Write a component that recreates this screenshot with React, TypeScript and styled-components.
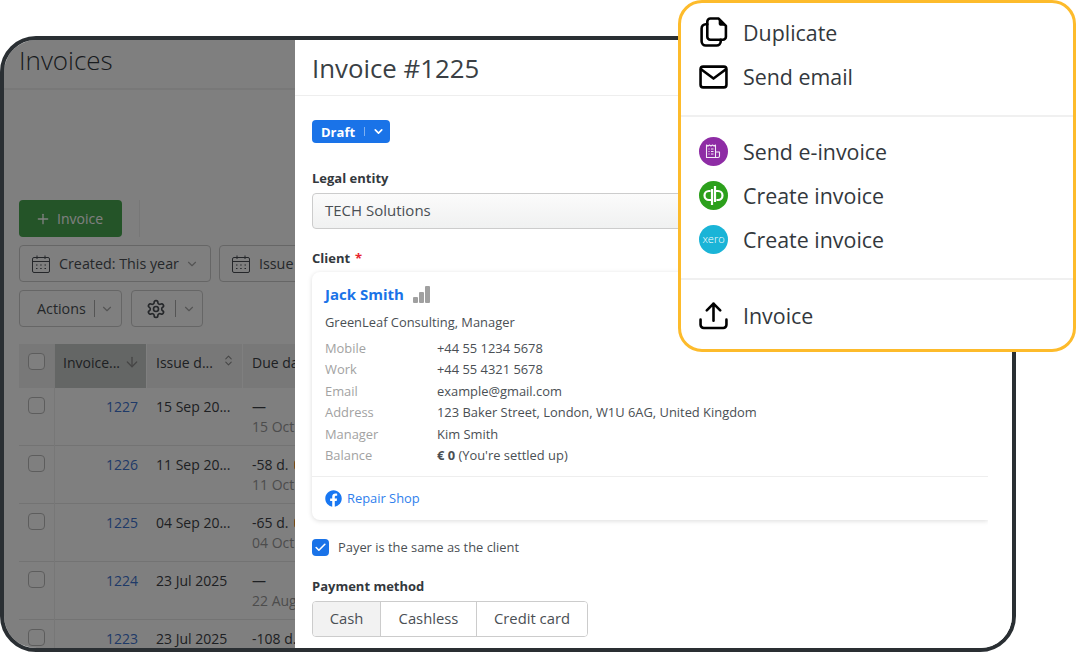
import React from "react";
import styled, { createGlobalStyle } from "styled-components";
import { FaFacebook } from "react-icons/fa";
import { LuChevronDown, LuChevronsUpDown, LuArrowDown, LuSettings, LuPlus, LuCheck } from "react-icons/lu";

const GlobalStyle = createGlobalStyle`
  html, body {
    margin: 0;
    padding: 0;
    background: #fff;
    overflow: hidden;
  }
  body {
    font-family: "Open Sans", "Liberation Sans", sans-serif;
    color: #33383d;
  }
  * {
    box-sizing: border-box;
  }
`;

const Page = styled.div`
  position: relative;
  width: 1076px;
  height: 652px;
  padding-top: 36px;
`;

const Frame = styled.div`
  display: flex;
  width: 1016px;
  height: 616px;
  border: 4px solid #2a2f33;
  border-radius: 36px;
  overflow: hidden;
  background: #fff;
`;

/* background list, dimmed by the drawer */
const ListPane = styled.div`
  position: relative;
  flex: 0 0 291px;
  overflow: hidden;
`;

const Dim = styled.div`
  position: absolute;
  inset: 0;
  background: rgba(0, 0, 0, 0.5);
`;

const ListHeader = styled.div`
  height: 50px;
  padding-left: 15px;
  border-bottom: 2px solid #f0f0f0;
  font-size: 26px;
  font-weight: 300;
  line-height: 40px;
  white-space: nowrap;
`;

const Toolbar = styled.div`
  display: flex;
  flex-direction: column;
  gap: 8px;
  width: 500px;
  padding: 110px 0 0 15px;
`;

const ToolRow = styled.div<{ $gap?: number }>`
  display: flex;
  gap: ${(p) => p.$gap ?? 8}px;
`;

const AddButton = styled.div`
  display: flex;
  align-items: center;
  justify-content: center;
  gap: 6px;
  width: 103px;
  height: 37px;
  padding-right: 3px;
  border-radius: 4px;
  background: #48a851;
  color: #fff;
  font-size: 14px;
`;

const ToolDivider = styled.div`
  width: 1px;
  height: 37px;
  margin-left: 9px;
  background: #eee;
`;

const ToolButton = styled.div<{ $width: number; $pad: number; $gap?: number }>`
  display: flex;
  align-items: center;
  gap: ${(p) => p.$gap ?? 9}px;
  width: ${(p) => p.$width}px;
  height: 37px;
  padding-left: ${(p) => p.$pad}px;
  border: 1px solid #ccc;
  border-radius: 4px;
  font-size: 14.3px;
  color: #4a4f54;
  white-space: nowrap;

  svg {
    flex: none;
  }
`;

const ToolChevron = styled(LuChevronDown)`
  margin-left: -3px;
  color: #a8a8a8;
`;

const ToolSplit = styled.span`
  width: 1px;
  height: 17px;
  background: #aaa;
`;

const Table = styled.div`
  margin: 17px 0 0 15px;
  width: 400px;
  font-size: 14px;
  color: #3c4146;
`;

const Row = styled.div<{ $head?: boolean }>`
  display: grid;
  grid-template-columns: 36px 92px 96px 176px;
  height: ${(p) => (p.$head ? 44 : 58)}px;
  border-bottom: ${(p) => (p.$head ? "none" : "1px solid #e6e6e6")};
`;

const Cell = styled.div`
  padding: 9px 9px;
  white-space: nowrap;
`;

const HeadCell = styled.div<{ $sorted?: boolean }>`
  display: flex;
  justify-content: space-between;
  gap: 4px;
  margin-right: 1px;
  padding: ${(p) => (p.$sorted ? "9px 6px 0 8px" : "9px 7px 0 9px")};
  background: ${(p) => (p.$sorted ? "#c9cdca" : "#f1f1f1")};
  white-space: nowrap;

  svg {
    flex: none;
    margin-top: 1px;
    color: #8c8c8c;
  }
`;

const CheckCell = styled.div<{ $head?: boolean }>`
  padding: 9px;
  border-right: 1px solid #efefef;
  background: ${(p) => (p.$head ? "#f1f1f1" : "transparent")};
`;

const RowCheck = styled.div`
  width: 17px;
  height: 17px;
  border: 1px solid #bbb;
  border-radius: 4px;
  background: #fff;
`;

const InvoiceNumber = styled.a`
  display: block;
  text-align: right;
  color: #3f74d0;
`;

const DueTop = styled.div`
  display: flex;
  align-items: center;
  gap: 6px;
  line-height: 20px;
`;

const OverdueDot = styled.span`
  width: 8px;
  height: 10px;
  border-radius: 3px;
  background: #f0962a;
`;

const Muted = styled.div`
  line-height: 20px;
  color: #999;
`;

/* invoice drawer */
const Drawer = styled.div`
  flex: 1;
  min-width: 0;
  background: #fff;
`;

const DrawerHeader = styled.div`
  height: 56px;
  padding-left: 17px;
  border-bottom: 1px solid #eee;
  font-size: 25.8px;
  line-height: 56px;
  color: #3a3f44;
`;

const DrawerBody = styled.div`
  padding: 24px 24px 0 17px;
`;

const StatusButton = styled.div`
  display: inline-flex;
  align-items: center;
  width: 78px;
  height: 23px;
  padding-left: 9px;
  border-radius: 4px;
  background: #1a73e8;
  color: #fff;
  font-size: 13px;
  font-weight: 700;
  vertical-align: top;
`;

const StatusSplit = styled.span`
  width: 1px;
  height: 9px;
  margin: 0 7px 0 9px;
  background: #7fb0f0;
`;

const FieldLabel = styled.div<{ $top: number }>`
  margin-top: ${(p) => p.$top}px;
  font-size: 13px;
  font-weight: 700;
  line-height: 18px;
  color: #33383d;
`;

const Required = styled.span`
  margin-left: 5px;
  color: #e8242c;
`;

const SelectBox = styled.div`
  height: 36px;
  margin-top: 6px;
  padding-left: 12px;
  border: 1px solid #ccc;
  border-radius: 4px;
  background: linear-gradient(#fbfbfb, #f0f1f1);
  font-size: 15px;
  line-height: 33px;
  color: #4a4f54;
`;

const ClientCard = styled.div`
  margin-top: 5px;
  height: 248px;
  padding-top: 11px;
  border-radius: 8px 0 0 8px;
  box-shadow: 0 1px 5px rgba(0, 0, 0, 0.14);
  clip-path: inset(-8px 0 -8px -8px);
`;

const CardTop = styled.div`
  padding: 0 13px;
`;

const ClientName = styled.div`
  display: flex;
  align-items: center;
  gap: 9px;
  font-size: 15px;
  font-weight: 700;
  line-height: 22px;
  color: #1a73e8;
`;

const Company = styled.div`
  margin-top: 8px;
  font-size: 12.9px;
  line-height: 18px;
  color: #4a4f54;
`;

const ContactGrid = styled.div`
  display: grid;
  grid-template-columns: 112px 1fr;
  grid-auto-rows: 21.5px;
  align-items: center;
  margin-top: 6px;
  font-size: 12.9px;
  color: #4a4f54;
`;

const ContactLabel = styled.span`
  color: #a2a2a2;
`;

const CardFooter = styled.div`
  display: flex;
  align-items: center;
  gap: 5px;
  height: 43px;
  margin-top: 10px;
  padding: 0 13px;
  border-top: 1px solid #eee;
  font-size: 12.9px;
  color: #2f80ed;

  svg {
    color: #1877f2;
  }
`;

const PayerRow = styled.div`
  display: flex;
  align-items: center;
  gap: 9px;
  margin-top: 18px;
  font-size: 12.9px;
  color: #4a4f54;
`;

const PayerCheck = styled.div`
  display: flex;
  align-items: center;
  justify-content: center;
  width: 17px;
  height: 17px;
  border-radius: 4px;
  background: #1a73e8;
  color: #fff;
`;

const Segments = styled.div`
  display: inline-flex;
  height: 36px;
  margin-top: 6px;
  border: 1px solid #ccc;
  border-radius: 4px;
  overflow: hidden;
`;

const Segment = styled.div<{ $width: number; $active?: boolean }>`
  width: ${(p) => p.$width}px;
  border-left: 1px solid #ccc;
  background: ${(p) => (p.$active ? "#f2f2f2" : "#fff")};
  font-size: 14.8px;
  line-height: 33px;
  text-align: center;
  color: #4a4f54;

  &:first-child {
    border-left: none;
  }
`;

/* highlighted export menu that sits over the frame */
const Menu = styled.div`
  position: absolute;
  top: 0;
  right: 0;
  width: 398px;
  height: 352px;
  border: 3.5px solid #fdbb2b;
  border-radius: 24px;
  background: #fff;
`;

const MenuSection = styled.div<{ $top: number; $bottom: number }>`
  padding: ${(p) => p.$top}px 0 ${(p) => p.$bottom}px 18px;
  border-top: 2px solid #f0f0f0;

  &:first-child {
    border-top: none;
  }
`;

const MenuItem = styled.div`
  display: flex;
  align-items: center;
  gap: 15px;
  height: 44.2px;
  font-size: 21.4px;
  color: #33383d;
`;

const IconSlot = styled.div`
  display: flex;
  align-items: center;
  justify-content: center;
  flex: none;
  width: 29px;
  height: 29px;
`;

const BlackStroke = styled.svg`
  fill: none;
  stroke: #000;
  stroke-width: 2.5;
  stroke-linecap: round;
  stroke-linejoin: round;
`;

const DuplicateIcon = () => (
  <BlackStroke width="29" height="30" viewBox="0 0 28 29">
    <path d="M11 1.5H19L26 8.5V19a3 3 0 0 1-3 3H11a3 3 0 0 1-3-3V4.5a3 3 0 0 1 3-3z" />
    <path d="M19 1.5V6a2.5 2.5 0 0 0 2.5 2.5H26z" fill="#000" stroke="none" />
    <path d="M8 7H6.5A4 4 0 0 0 2.5 11V23.5a4 4 0 0 0 4 4H17a4 4 0 0 0 4-4V22" />
  </BlackStroke>
);

const MailIcon = () => (
  <BlackStroke width="29" height="24" viewBox="0 0 28 23">
    <rect x="1.5" y="1.5" width="25" height="20" rx="2.5" />
    <path d="M2 4L14 13L26 4" />
  </BlackStroke>
);

const UploadIcon = () => (
  <BlackStroke width="29" height="29" viewBox="0 0 28 28">
    <path d="M14 19V2.5M7.5 9L14 2.5L20.5 9" />
    <path d="M1.5 18V23a3 3 0 0 0 3 3H23.5a3 3 0 0 0 3-3V18" />
  </BlackStroke>
);

const EInvoiceIcon = () => (
  <svg width="29" height="29" viewBox="0 0 29 29">
    <circle cx="14.5" cy="14.5" r="14.5" fill="#8e2ca5" />
    <g fill="none" stroke="#fff" strokeWidth="1.1" strokeLinejoin="round" opacity="0.9">
      <path d="M7.5 8l1.5 1 1.5-1 1.5 1 1.5-1 1.5 1 1.5-1V20.500H7.500z" />
      <path d="M16.500 15h4v4a1.500 1.500 0 0 1-1.500 1.500H17" />
      <path d="M9.500 12h1M12 12h2.500M9.500 14.500h1M12 14.500h2.500M9.500 17h1M12 17h2.500" />
    </g>
  </svg>
);

const QuickbooksIcon = () => (
  <svg width="29" height="29" viewBox="0 0 29 29">
    <circle cx="14.5" cy="14.5" r="14.5" fill="#2ca01c" />
    <g fill="none" stroke="#fff" strokeWidth="2.2">
      <path d="M11.5 10H10a4.500 4.500 0 0 0 0 9h2.800M13 8V24" />
      <path d="M17.5 19H19a4.500 4.500 0 0 0 0-9h-2.800M16 5V21" />
    </g>
  </svg>
);

const XeroMark = styled.text`
  font-family: "Open Sans", "Liberation Sans", sans-serif;
  font-size: 11px;
  font-weight: 300;
  fill: #fff;
  text-anchor: middle;
`;

const XeroIcon = () => (
  <svg width="29" height="29" viewBox="0 0 29 29">
    <circle cx="14.5" cy="14.5" r="14.5" fill="#1ab4d7" />
    <XeroMark x="14.5" y="18.200">xero</XeroMark>
  </svg>
);

const SignalBars = () => (
  <svg width="17" height="17" viewBox="0 0 17 17" fill="#a0a0a0">
    <rect x="0" y="11" width="5" height="6" rx="1" />
    <rect x="6" y="6" width="5" height="11" rx="1" />
    <rect x="12" y="0" width="5" height="17" rx="1" />
  </svg>
);

const CalendarIcon = () => (
  <svg width="18" height="18" viewBox="0 0 18 18" fill="none" stroke="currentColor" strokeWidth="1">
    <rect x="0.5" y="2.5" width="17" height="15" rx="1.5" />
    <path d="M0.500 6.500H17.500M5 0.500V4M13 0.500V4" />
    <path d="M4 10h1.500M8.200 10h1.500M12.500 10h1.500M4 13.500h1.500M8.200 13.500h1.500M12.500 13.500h1.500" />
  </svg>
);

const rows = [
  { id: "1227", issue: "15 Sep 20...", due: "—", date: "15 Oct 2025", late: false },
  { id: "1226", issue: "11 Sep 20...", due: "-58 d.", date: "11 Oct 2025", late: true },
  { id: "1225", issue: "04 Sep 20...", due: "-65 d.", date: "04 Oct 2025", late: true },
  { id: "1224", issue: "23 Jul 2025", due: "—", date: "22 Aug 2025", late: false },
  { id: "1223", issue: "23 Jul 2025", due: "-108 d.", date: "22 Aug 2025", late: true },
];

const contacts = [
  ["Mobile", "+44 55 1234 5678"],
  ["Work", "+44 55 4321 5678"],
  ["Email", "example@gmail.com"],
  ["Address", "123 Baker Street, London, W1U 6AG, United Kingdom"],
  ["Manager", "Kim Smith"],
];

export default function App() {
  return (
    <Page>
      <GlobalStyle />
      <Frame>
        <ListPane>
          <ListHeader>Invoices</ListHeader>
          <Toolbar>
            <ToolRow>
              <AddButton>
                <LuPlus size={16} />
                Invoice
              </AddButton>
              <ToolDivider />
            </ToolRow>
            <ToolRow>
              <ToolButton $width={192} $pad={12}>
                <CalendarIcon />
                Created: This year
                <ToolChevron size={14} />
              </ToolButton>
              <ToolButton $width={192} $pad={12}>
                <CalendarIcon />
                Issue date
                <ToolChevron size={14} />
              </ToolButton>
            </ToolRow>
            <ToolRow $gap={9}>
              <ToolButton $width={103} $pad={17} $gap={8}>
                Actions
                <ToolSplit />
                <ToolChevron size={14} />
              </ToolButton>
              <ToolButton $width={72} $pad={14}>
                <LuSettings size={20} />
                <ToolSplit />
                <ToolChevron size={14} />
              </ToolButton>
            </ToolRow>
          </Toolbar>
          <Table>
            <Row $head>
              <CheckCell $head>
                <RowCheck />
              </CheckCell>
              <HeadCell $sorted>
                Invoice...
                <LuArrowDown size={16} />
              </HeadCell>
              <HeadCell>
                Issue d...
                <LuChevronsUpDown size={13} />
              </HeadCell>
              <HeadCell>Due date</HeadCell>
            </Row>
            {rows.map((row) => (
              <Row key={row.id}>
                <CheckCell>
                  <RowCheck />
                </CheckCell>
                <Cell>
                  <InvoiceNumber>{row.id}</InvoiceNumber>
                </Cell>
                <Cell>{row.issue}</Cell>
                <Cell>
                  <DueTop>
                    {row.due}
                    {row.late && <OverdueDot />}
                  </DueTop>
                  <Muted>{row.date}</Muted>
                </Cell>
              </Row>
            ))}
          </Table>
          <Dim />
        </ListPane>
        <Drawer>
          <DrawerHeader>Invoice #1225</DrawerHeader>
          <DrawerBody>
            <StatusButton>
              Draft
              <StatusSplit />
              <LuChevronDown size={13} strokeWidth={3} />
            </StatusButton>
            <FieldLabel $top={26}>Legal entity</FieldLabel>
            <SelectBox>TECH Solutions</SelectBox>
            <FieldLabel $top={20}>
              Client<Required>*</Required>
            </FieldLabel>
            <ClientCard>
              <CardTop>
                <ClientName>
                  Jack Smith
                  <SignalBars />
                </ClientName>
                <Company>GreenLeaf Consulting, Manager</Company>
                <ContactGrid>
                  {contacts.map(([label, value]) => (
                    <React.Fragment key={label}>
                      <ContactLabel>{label}</ContactLabel>
                      <span>{value}</span>
                    </React.Fragment>
                  ))}
                  <ContactLabel>Balance</ContactLabel>
                  <span>
                    <b>€ 0</b> (You're settled up)
                  </span>
                </ContactGrid>
              </CardTop>
              <CardFooter>
                <FaFacebook size={17} />
                Repair Shop
              </CardFooter>
            </ClientCard>
            <PayerRow>
              <PayerCheck>
                <LuCheck size={13} strokeWidth={3} />
              </PayerCheck>
              Payer is the same as the client
            </PayerRow>
            <FieldLabel $top={21}>Payment method</FieldLabel>
            <Segments>
              <Segment $width={67} $active>Cash</Segment>
              <Segment $width={96}>Cashless</Segment>
              <Segment $width={111}>Credit card</Segment>
            </Segments>
          </DrawerBody>
        </Drawer>
      </Frame>
      <Menu>
        <MenuSection $top={7.4} $bottom={16}>
          <MenuItem>
            <IconSlot><DuplicateIcon /></IconSlot>
            Duplicate
          </MenuItem>
          <MenuItem>
            <IconSlot><MailIcon /></IconSlot>
            Send email
          </MenuItem>
        </MenuSection>
        <MenuSection $top={12.75} $bottom={16}>
          <MenuItem>
            <IconSlot><EInvoiceIcon /></IconSlot>
            Send e-invoice
          </MenuItem>
          <MenuItem>
            <IconSlot><QuickbooksIcon /></IconSlot>
            Create invoice
          </MenuItem>
          <MenuItem>
            <IconSlot><XeroIcon /></IconSlot>
            Create invoice
          </MenuItem>
        </MenuSection>
        <MenuSection $top={13.25} $bottom={0}>
          <MenuItem>
            <IconSlot><UploadIcon /></IconSlot>
            Invoice
          </MenuItem>
        </MenuSection>
      </Menu>
    </Page>
  );
}
